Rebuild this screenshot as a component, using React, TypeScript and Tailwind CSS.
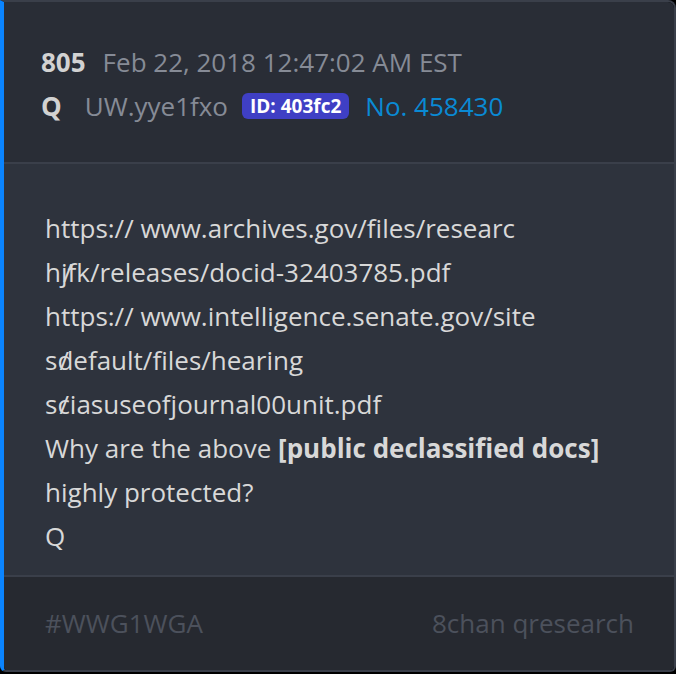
export default function App() {
  return (
    <div className="w-[676px] h-[674px] bg-black pb-[2px]">
      <div
        className="h-full flex flex-col overflow-hidden rounded-tr-lg rounded-br-md rounded-bl-md border-2 border-[#3a3f4a] border-l-4 border-l-[#0a84ff] font-['Open_Sans',sans-serif]"
      >
        {/* Header */}
        <div className="bg-[#292d36] pl-[37px] pt-[38px] pb-[34px] border-b-2 border-[#3a3f4a] text-[26px]">
          <div className="flex items-center h-[44px]">
            <span className="font-bold text-[#d2d2d2]">805</span>
            <span className="ml-[17px] text-[#868b96]">Feb 22, 2018 12:47:02 AM EST</span>
          </div>
          <div className="flex items-center h-[44px]">
            <span className="font-bold text-[#d2d2d2]">Q</span>
            <span className="ml-[23px] text-[#868b96]">UW.yye1fxo</span>
            <span className="ml-[14px] bg-[#3f3fc4] text-white font-bold text-[19px] leading-[26px] px-[8px] rounded-[6px]">
              ID: 403fc2
            </span>
            <span className="ml-[16px] text-[#0a8ad4]">No. 458430</span>
          </div>
        </div>

        {/* Body */}
        <div className="flex-1 bg-[#2e333d] pl-[41px] pt-[42px] text-[26px] leading-[44px] text-[#d8d8d8]">
          <div>https:// www.archives.gov/files/researc</div>
          <div>
            h<span className="inline-block w-0 translate-x-[2px]">/</span>jfk/releases/docid-32403785.pdf
          </div>
          <div>https:// www.intelligence.senate.gov/site</div>
          <div>
            s<span className="inline-block w-0 translate-x-[2px]">/</span>default/files/hearing
          </div>
          <div>
            s<span className="inline-block w-0 translate-x-[2px]">/</span>ciasuseofjournal00unit.pdf
          </div>
          <div>
            Why are the above <span className="font-bold">[public declassified docs]</span>
          </div>
          <div>highly protected?</div>
          <div>Q</div>
        </div>

        {/* Footer */}
        <div className="h-[95px] shrink-0 bg-[#262930] border-t-2 border-[#3a3f4a] flex items-center justify-between pl-[41px] pr-[40px] text-[26px] text-[#4c515c]">
          <span>#WWG1WGA</span>
          <span>8chan qresearch</span>
        </div>
      </div>
    </div>
  )
}
